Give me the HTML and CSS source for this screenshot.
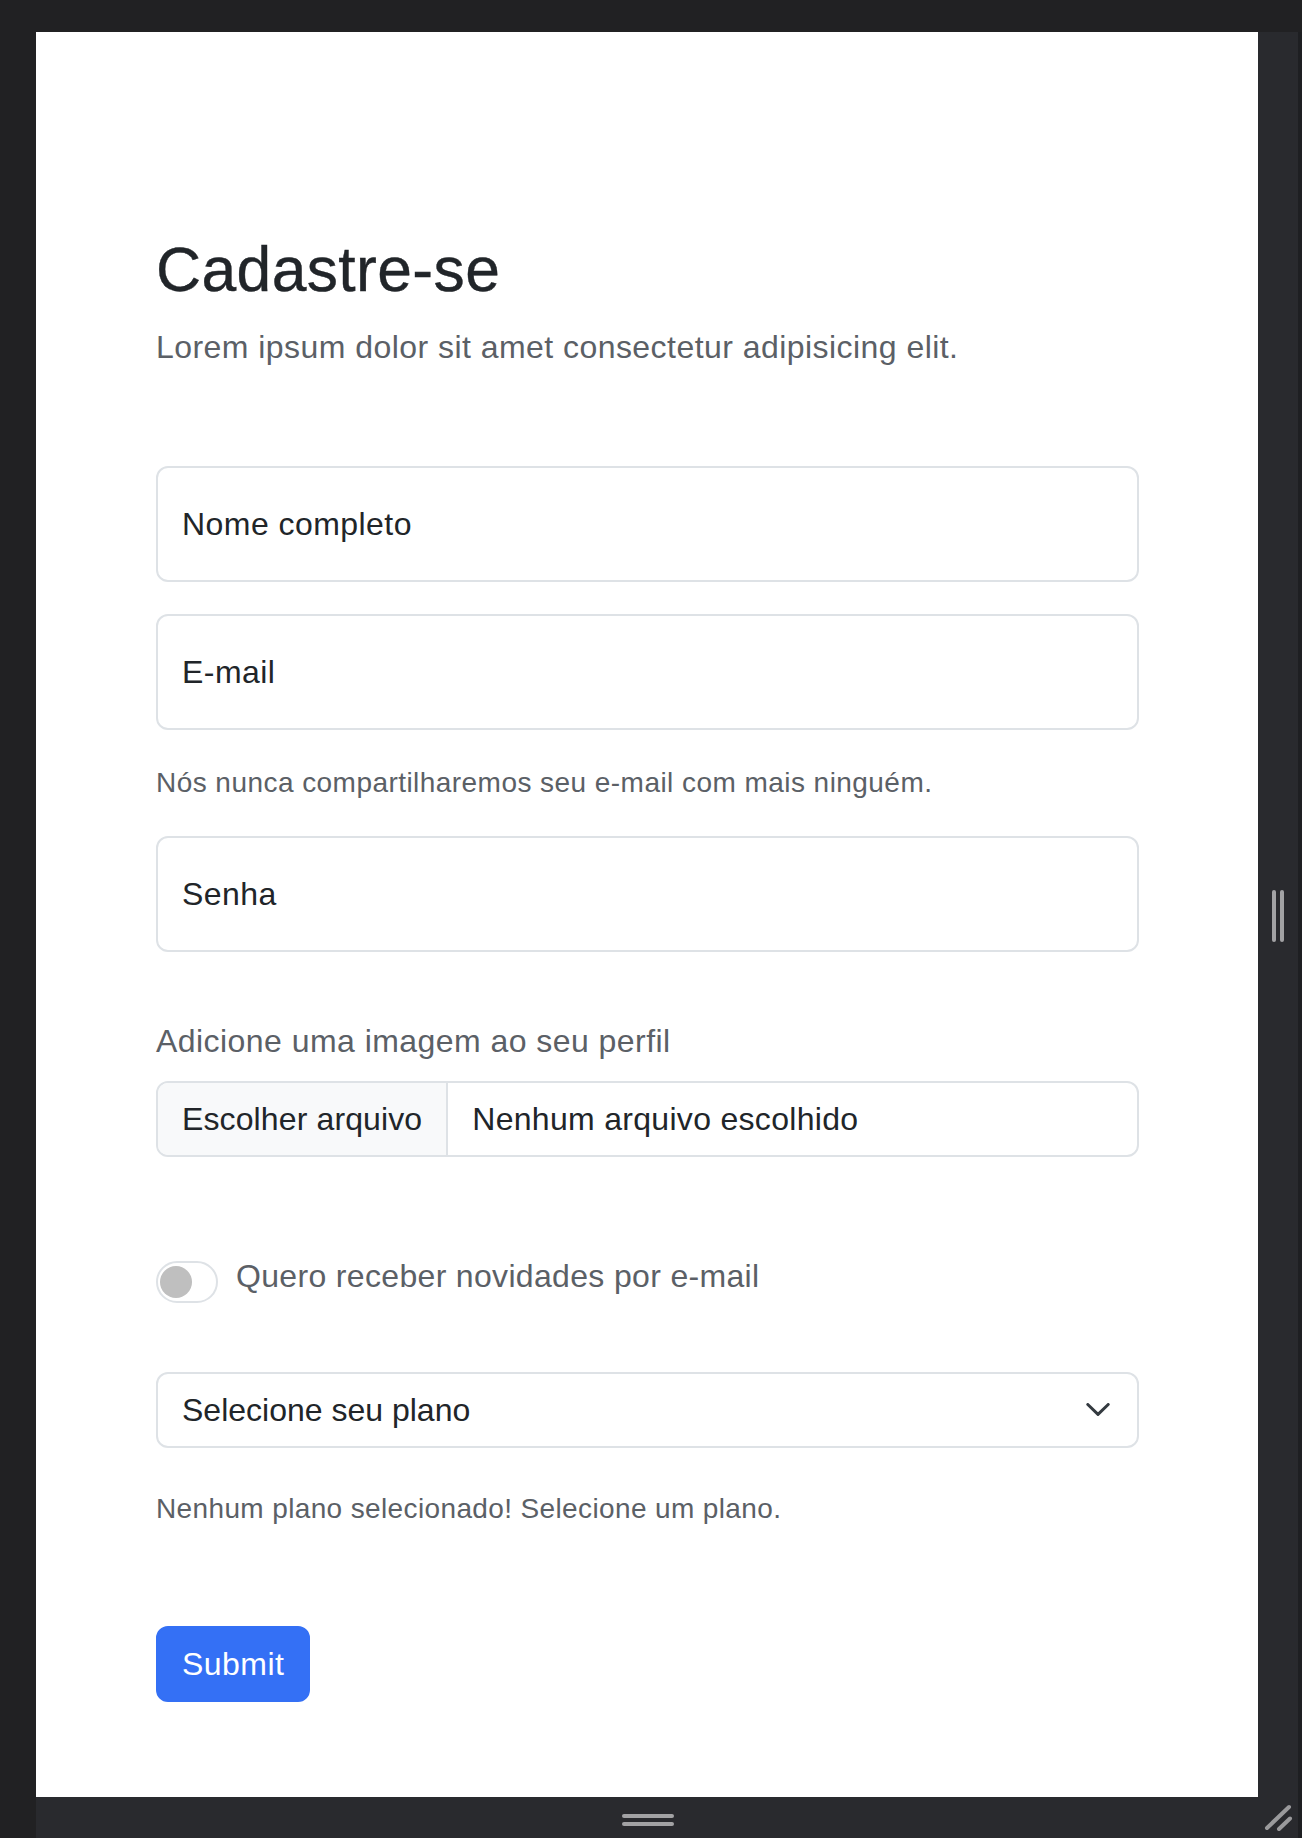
FILE: index.html
```html
<!DOCTYPE html>
<html lang="pt-BR">
<head>
<meta charset="utf-8">
<title>Cadastre-se</title>
<link rel="stylesheet" href="styles.css">
</head>
<body>
<div class="frame">
  <div class="topbar"></div>
  <div class="leftbar"></div>
  <main class="panel">
    <form class="signup">
      <h1 class="title">Cadastre-se</h1>
      <p class="lead">Lorem ipsum dolor sit amet consectetur adipisicing elit.</p>

      <div class="field float"><span class="ph">Nome completo</span></div>
      <div class="field float"><span class="ph">E-mail</span></div>
      <div class="hint">Nós nunca compartilharemos seu e-mail com mais ninguém.</div>
      <div class="field float pw"><span class="ph">Senha</span></div>

      <label class="flabel">Adicione uma imagem ao seu perfil</label>
      <div class="field file">
        <span class="file-btn">Escolher arquivo</span>
        <span class="file-name">Nenhum arquivo escolhido</span>
      </div>

      <div class="switch-row">
        <span class="switch"><span class="knob"></span></span>
        <span class="switch-label">Quero receber novidades por e-mail</span>
      </div>

      <div class="field select">
        <span>Selecione seu plano</span>
        <svg class="chev" width="24" height="13" viewBox="0 0 24 13"><path d="M1.8 1.5 L12 11.4 L22.2 1.5" fill="none" stroke="#343a40" stroke-width="3" stroke-linecap="round" stroke-linejoin="round"/></svg>
      </div>
      <div class="hint plan">Nenhum plano selecionado! Selecione um plano.</div>

      <button type="button" class="submit">Submit</button>
    </form>
  </main>
  <div class="rightbar"><span class="vbar"></span><span class="vbar"></span></div>
  <div class="bottombar"><span class="hbar"></span><span class="hbar"></span></div>
  <div class="corner">
    <svg width="40" height="41" viewBox="0 0 40 41"><path d="M9 31 L31 10 M21 32 L32 21.5" stroke="#9a9a9c" stroke-width="4" stroke-linecap="round" fill="none"/></svg>
  </div>
</div>
</body>
</html>
```

FILE: styles.css
```css
html, body {
  margin: 0;
  padding: 0;
  background: #212123;
}

.frame {
  width: 1302px;
  height: 1838px;
  display: grid;
  grid-template-columns: 36px 1222px 44px;
  grid-template-rows: 32px 1765px 41px;
  font-family: "Liberation Sans", Arial, sans-serif;
  color: #212529;
  letter-spacing: 0.45px;
}

.topbar {
  grid-column: 1 / 4;
  grid-row: 1;
  background: #212123;
}

.leftbar {
  grid-column: 1;
  grid-row: 2 / 4;
  background: #212123;
}

.panel {
  grid-column: 2;
  grid-row: 2;
  background: #ffffff;
  padding: 200px 119px 0 120px;
  box-sizing: border-box;
}

.rightbar {
  grid-column: 3;
  grid-row: 2;
  background: #292a2e;
  border-right: 4px solid #1e1f22;
  display: flex;
  justify-content: center;
  align-items: center;
  gap: 4px;
  padding-top: 3px;
}

.vbar {
  width: 4px;
  height: 52px;
  border-radius: 2px;
  background: #a2a2a4;
}

.bottombar {
  grid-column: 2;
  grid-row: 3;
  background: #292a2e;
  display: flex;
  flex-direction: column;
  align-items: center;
  justify-content: center;
  gap: 4px;
  padding: 5px 0 0 2px;
}

.hbar {
  width: 52px;
  height: 4px;
  border-radius: 2px;
  background: #a2a2a4;
}

.corner {
  grid-column: 3;
  grid-row: 3;
  background: #292a2e;
  border-right: 4px solid #1e1f22;
}

.corner svg {
  display: block;
}

/* form */
.signup {
  display: flex;
  flex-direction: column;
  margin: 0;
}

.title {
  margin: 0 0 16px;
  font-size: 62.4px;
  line-height: 75px;
  font-weight: 400;
  letter-spacing: 0.4px;
  color: #212529;
  -webkit-text-stroke: 0.4px #212529;
}

.lead {
  margin: 0 0 95px;
  font-size: 32px;
  line-height: 48px;
  color: #5b6066;
}

.field {
  box-sizing: border-box;
  border: 2px solid #dee2e6;
  border-radius: 12px;
  background: #fff;
  font-size: 32px;
  line-height: 48px;
  color: #212529;
}

.float {
  height: 116px;
  padding: 32px 24px;
  margin-bottom: 32px;
}

.hint {
  font-size: 28px;
  line-height: 42px;
  color: #5b6066;
  margin-bottom: 32px;
}

.flabel {
  margin: 33px 0 16px;
  font-size: 32px;
  line-height: 48px;
  color: #5b6066;
}

.file {
  height: 76px;
  display: flex;
  overflow: hidden;
  margin-bottom: 95px;
}

.file-btn {
  background: #f8f9fa;
  border-right: 2px solid #dee2e6;
  padding: 12px 24px;
  letter-spacing: 0.12px;
}

.file-name {
  padding: 12px 24px;
  letter-spacing: 0.3px;
}

.switch-row {
  display: flex;
  align-items: flex-start;
  height: 50px;
  margin-bottom: 70px;
}

.switch {
  box-sizing: border-box;
  width: 62px;
  height: 42px;
  margin-top: 9px;
  margin-right: 18px;
  border: 2px solid #dee2e6;
  border-radius: 21px;
  display: flex;
  align-items: center;
  padding-left: 2px;
}

.knob {
  width: 32px;
  height: 32px;
  border-radius: 50%;
  background: #bfbfbf;
}

.switch-label {
  font-size: 32px;
  line-height: 48px;
  color: #5b6066;
  letter-spacing: 0.33px;
}

.select {
  height: 76px;
  padding: 12px 27px 12px 24px;
  display: flex;
  align-items: center;
  justify-content: space-between;
  margin-bottom: 40px;
  letter-spacing: 0;
}

.chev {
  display: block;
  margin-top: -2px;
}

.plan {
  margin-bottom: 96px;
  letter-spacing: 0.37px;
}

.submit {
  align-self: flex-start;
  box-sizing: border-box;
  height: 76px;
  padding: 0 24px;
  border: 2px solid #3470f5;
  border-radius: 12px;
  background: #3470f5;
  color: #ffffff;
  font-family: "Liberation Sans", Arial, sans-serif;
  font-size: 32px;
  line-height: 48px;
  letter-spacing: 0.45px;
}
```
